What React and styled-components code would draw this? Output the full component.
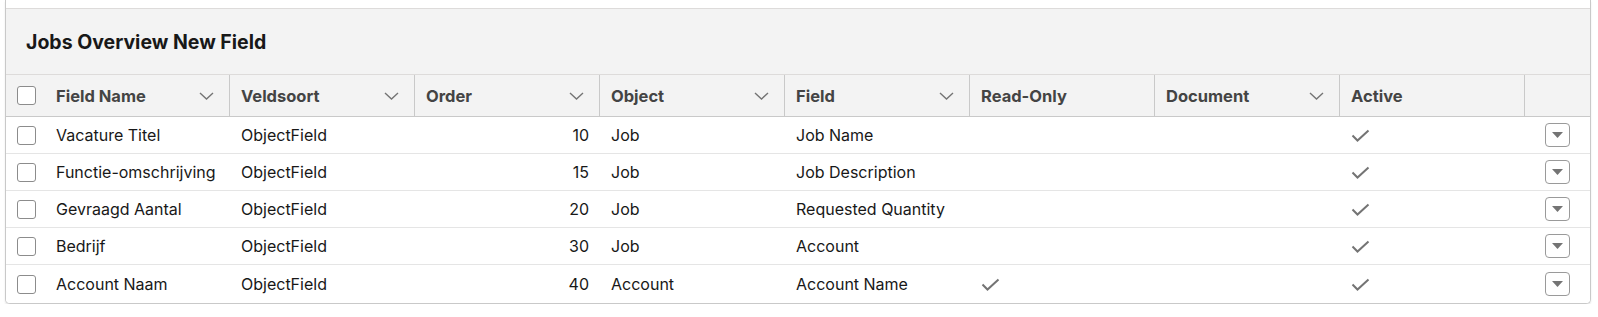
import React from "react";
import styled, { createGlobalStyle } from "styled-components";

const GlobalStyle = createGlobalStyle`
  body {
    margin: 0;
    background: #ffffff;
    font-family: Inter, "Liberation Sans", Arial, sans-serif;
    color: #181818;
  }
`;

const Card = styled.div`
  margin: 0 7px 0 5px;
  border: 1px solid #c9c9c9;
  border-top: none;
  border-radius: 0 0 5px 5px;
  box-shadow: 0 2px 2px rgba(0, 0, 0, 0.1);
  background: #fff;
  overflow: hidden;
`;

const TopGap = styled.div`
  height: 8px;
`;

const TitleBar = styled.div`
  display: flex;
  align-items: center;
  height: 65px;
  padding-left: 20px;
  background: #f3f3f3;
  border-top: 1px solid #dddbda;
  border-bottom: 1px solid #dddbda;
  font-size: 19.5px;
  font-weight: 700;
  color: #181818;
`;

const Row = styled.div`
  display: grid;
  grid-template-columns: 39px repeat(8, 185px) 1fr;
  height: ${(p) => (p.$head ? "41px" : "36px")};
  background: ${(p) => (p.$head ? "#f3f3f3" : "#fff")};
  border-bottom: 1px solid ${(p) => (p.$head ? "#c9c9c9" : "#e5e5e5")};
  &:last-child {
    height: 38px;
    border-bottom: none;
  }
`;

const HeadCell = styled.div`
  display: flex;
  align-items: center;
  justify-content: space-between;
  padding: 0 15px 0 11px;
  border-right: ${(p) => (p.$noLine ? "none" : "1px solid #c9c9c9")};
  font-size: 16.5px;
  font-weight: 700;
  color: #444444;
  white-space: nowrap;
`;

const Cell = styled.div`
  display: flex;
  align-items: center;
  justify-content: ${(p) => (p.$right ? "flex-end" : p.$center ? "center" : "flex-start")};
  padding: 0 11px;
  font-size: 16px;
  color: #181818;
  white-space: nowrap;
`;

const BoxCell = styled.div`
  display: flex;
  align-items: center;
  padding-left: 11px;
`;

const Box = styled.span`
  display: inline-block;
  width: 17px;
  height: 17px;
  border: 1px solid #8c8c8c;
  border-radius: 3px;
  background: #fff;
`;

const MenuButton = styled.button`
  display: flex;
  align-items: center;
  justify-content: center;
  width: 25px;
  height: 24px;
  padding: 0;
  border: 1px solid #9a9a9a;
  border-radius: 4px;
  background: #fff;
  cursor: pointer;
`;

const Chevron = () => (
  <svg width="15" height="8" viewBox="0 0 15 8">
    <polyline points="1,1 7.5,7 14,1" fill="none" stroke="#747474" strokeWidth="1.4" />
  </svg>
);

const Check = () => (
  <svg width="19" height="13" viewBox="0 0 19 13">
    <polyline points="1.5,6.5 6.5,11.5 17.5,1.5" fill="none" stroke="#747474" strokeWidth="2" />
  </svg>
);

const Caret = () => (
  <svg width="11" height="6" viewBox="0 0 11 6">
    <polygon points="0,0 11,0 5.5,6" fill="#747474" />
  </svg>
);

const columns = [
  { label: "Field Name", sort: true },
  { label: "Veldsoort", sort: true },
  { label: "Order", sort: true },
  { label: "Object", sort: true },
  { label: "Field", sort: true },
  { label: "Read-Only", sort: false },
  { label: "Document", sort: true },
  { label: "Active", sort: false },
];

const rows = [
  { name: "Vacature Titel", type: "ObjectField", order: 10, object: "Job", field: "Job Name", readOnly: false, active: true },
  { name: "Functie-omschrijving", type: "ObjectField", order: 15, object: "Job", field: "Job Description", readOnly: false, active: true },
  { name: "Gevraagd Aantal", type: "ObjectField", order: 20, object: "Job", field: "Requested Quantity", readOnly: false, active: true },
  { name: "Bedrijf", type: "ObjectField", order: 30, object: "Job", field: "Account", readOnly: false, active: true },
  { name: "Account Naam", type: "ObjectField", order: 40, object: "Account", field: "Account Name", readOnly: true, active: true },
];

export default function App() {
  return (
    <>
      <GlobalStyle />
      <Card>
        <TopGap />
        <TitleBar>Jobs Overview New Field</TitleBar>
        <Row $head>
          <BoxCell>
            <Box />
          </BoxCell>
          {columns.map((c) => (
            <HeadCell key={c.label}>
              <span>{c.label}</span>
              {c.sort && <Chevron />}
            </HeadCell>
          ))}
          <HeadCell $noLine />
        </Row>
        {rows.map((r) => (
          <Row key={r.name}>
            <BoxCell>
              <Box />
            </BoxCell>
            <Cell>{r.name}</Cell>
            <Cell>{r.type}</Cell>
            <Cell $right>{r.order}</Cell>
            <Cell>{r.object}</Cell>
            <Cell>{r.field}</Cell>
            <Cell>{r.readOnly && <Check />}</Cell>
            <Cell />
            <Cell>{r.active && <Check />}</Cell>
            <Cell $center>
              <MenuButton>
                <Caret />
              </MenuButton>
            </Cell>
          </Row>
        ))}
      </Card>
    </>
  );
}
